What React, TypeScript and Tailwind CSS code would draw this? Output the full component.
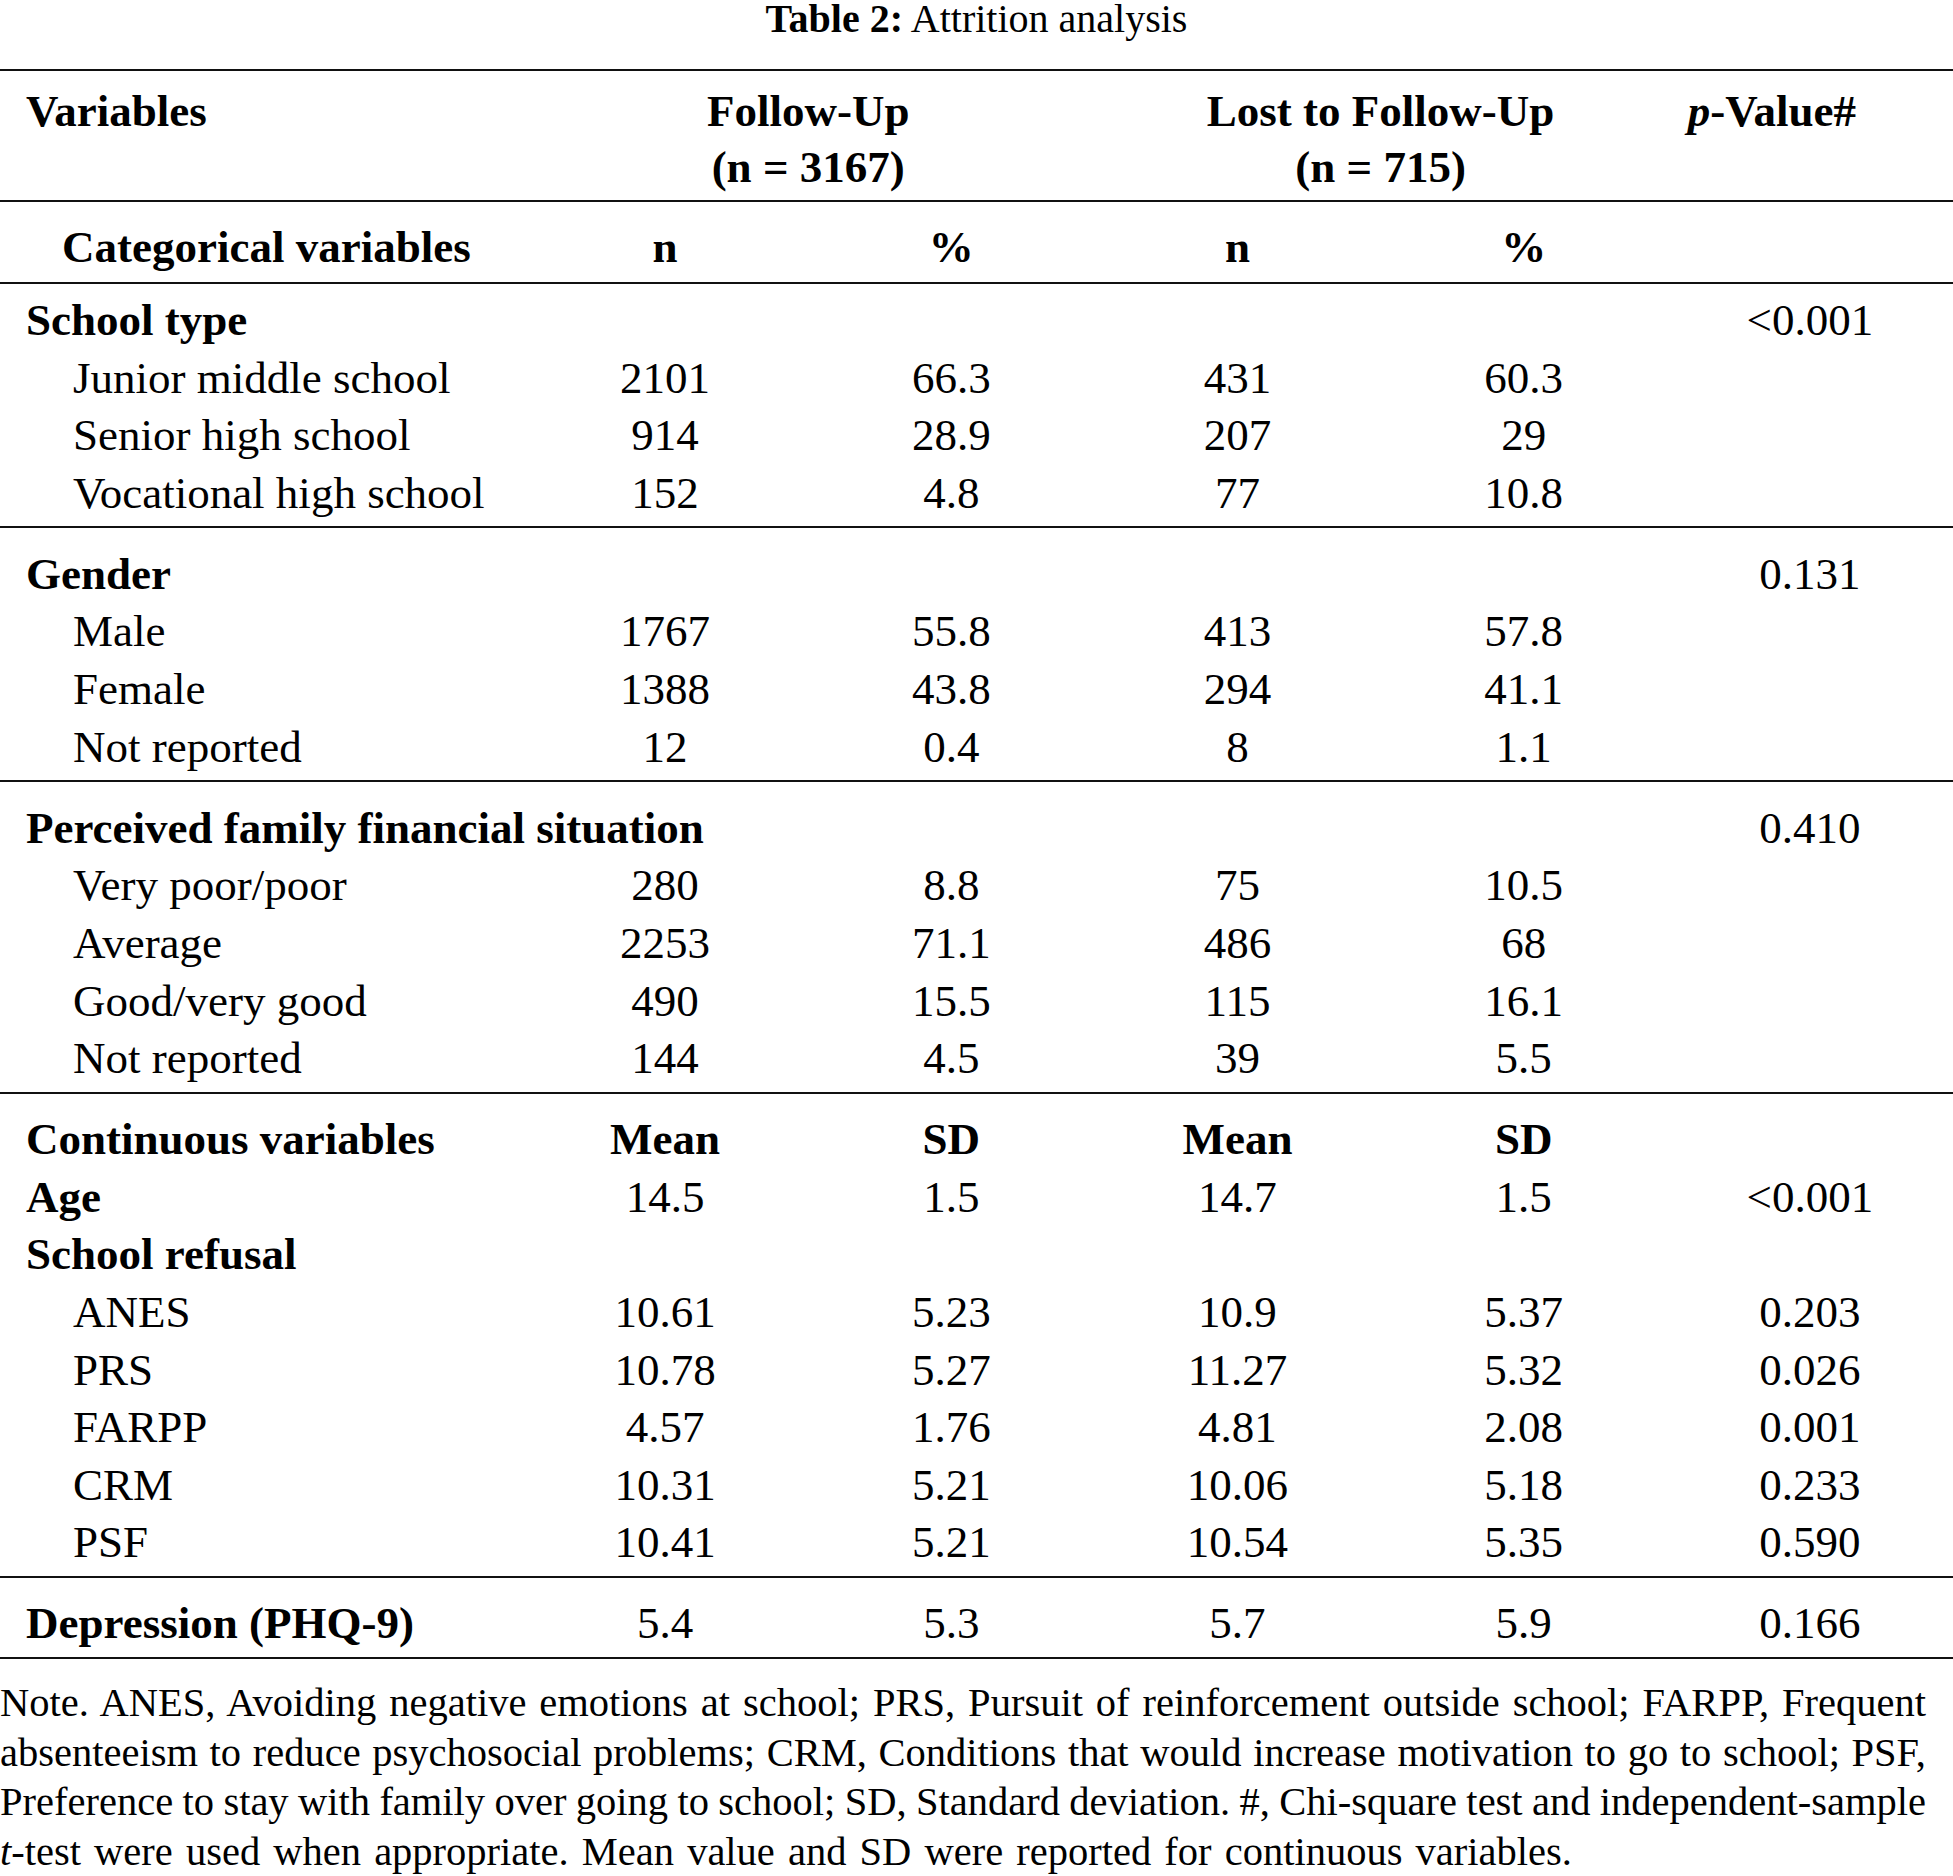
import React from "react";

type Cells = [React.ReactNode, React.ReactNode, React.ReactNode, React.ReactNode, React.ReactNode];

function Row({
  label,
  indent = "head",
  bold = false,
  boldCells = false,
  cells = ["", "", "", "", ""],
}: {
  label: React.ReactNode;
  indent?: "head" | "sub" | "cat";
  bold?: boolean;
  boldCells?: boolean;
  cells?: Cells;
}) {
  const pad = indent === "sub" ? "pl-[73px]" : indent === "cat" ? "pl-[62px]" : "pl-[26px]";
  return (
    <div className="grid grid-cols-[522px_repeat(5,1fr)] h-[57.6px] leading-[57.6px] items-center">
      <div className={`${pad} whitespace-nowrap ${bold ? "font-bold" : ""}`}>{label}</div>
      {cells.map((c, i) => (
        <div key={i} className={`text-center whitespace-nowrap ${boldCells && i < 4 ? "font-bold" : ""}`}>
          {c}
        </div>
      ))}
    </div>
  );
}

function Rule() {
  return <div className="h-[2px] bg-[#111]" />;
}

function Section({ children, first = false }: { children: React.ReactNode; first?: boolean }) {
  return <div className={`${first ? "pt-[8px]" : "pt-[17.5px]"} pb-[4px]`}>{children}</div>;
}

export default function App() {
  return (
    <div className="w-full bg-white text-black font-['Liberation_Serif',serif]">
      <div className="pt-[2px] h-[36px] leading-[34px] text-[40px] text-center mb-[33px] whitespace-nowrap">
        <span className="font-bold">Table 2:</span> Attrition analysis
      </div>

      <div className="text-[45px]">
        <Rule />
        <div className="grid grid-cols-[522px_2fr_2fr_1fr] pt-[12px] pb-[4.5px] leading-[56px] font-bold">
          <div className="pl-[26px]">Variables</div>
          <div className="text-center whitespace-nowrap">
            Follow-Up
            <br />
            (n = 3167)
          </div>
          <div className="text-center whitespace-nowrap">
            Lost to Follow-Up
            <br />
            (n = 715)
          </div>
          <div className="text-center pr-[76px] whitespace-nowrap">
            <i>p</i>-Value#
          </div>
        </div>
        <Rule />
        <div className="pt-[17.5px] pb-[5.4px]">
          <Row label="Categorical variables" indent="cat" bold boldCells cells={["n", "%", "n", "%", ""]} />
        </div>
        <Rule />

        <Section first>
          <Row label="School type" bold cells={["", "", "", "", "<0.001"]} />
          <Row label="Junior middle school" indent="sub" cells={["2101", "66.3", "431", "60.3", ""]} />
          <Row label="Senior high school" indent="sub" cells={["914", "28.9", "207", "29", ""]} />
          <Row label="Vocational high school" indent="sub" cells={["152", "4.8", "77", "10.8", ""]} />
        </Section>
        <Rule />

        <Section>
          <Row label="Gender" bold cells={["", "", "", "", "0.131"]} />
          <Row label="Male" indent="sub" cells={["1767", "55.8", "413", "57.8", ""]} />
          <Row label="Female" indent="sub" cells={["1388", "43.8", "294", "41.1", ""]} />
          <Row label="Not reported" indent="sub" cells={["12", "0.4", "8", "1.1", ""]} />
        </Section>
        <Rule />

        <Section>
          <Row label="Perceived family financial situation" bold cells={["", "", "", "", "0.410"]} />
          <Row label="Very poor/poor" indent="sub" cells={["280", "8.8", "75", "10.5", ""]} />
          <Row label="Average" indent="sub" cells={["2253", "71.1", "486", "68", ""]} />
          <Row label="Good/very good" indent="sub" cells={["490", "15.5", "115", "16.1", ""]} />
          <Row label="Not reported" indent="sub" cells={["144", "4.5", "39", "5.5", ""]} />
        </Section>
        <Rule />

        <Section>
          <Row label="Continuous variables" bold boldCells cells={["Mean", "SD", "Mean", "SD", ""]} />
          <Row label="Age" bold cells={["14.5", "1.5", "14.7", "1.5", "<0.001"]} />
          <Row label="School refusal" bold />
          <Row label="ANES" indent="sub" cells={["10.61", "5.23", "10.9", "5.37", "0.203"]} />
          <Row label="PRS" indent="sub" cells={["10.78", "5.27", "11.27", "5.32", "0.026"]} />
          <Row label="FARPP" indent="sub" cells={["4.57", "1.76", "4.81", "2.08", "0.001"]} />
          <Row label="CRM" indent="sub" cells={["10.31", "5.21", "10.06", "5.18", "0.233"]} />
          <Row label="PSF" indent="sub" cells={["10.41", "5.21", "10.54", "5.35", "0.590"]} />
        </Section>
        <Rule />

        <Section>
          <Row label="Depression (PHQ-9)" bold cells={["5.4", "5.3", "5.7", "5.9", "0.166"]} />
        </Section>
        <Rule />
      </div>

      <div className="pt-[19px] pr-[27px] text-[40.5px] leading-[49.7px]">
        <div className="text-justify [text-align-last:justify] whitespace-nowrap [word-spacing:-1px]">
          Note. ANES, Avoiding negative emotions at school; PRS, Pursuit of reinforcement outside school; FARPP, Frequent
        </div>
        <div className="text-justify [text-align-last:justify] whitespace-nowrap [word-spacing:-1px]">
          absenteeism to reduce psychosocial problems; CRM, Conditions that would increase motivation to go to school; PSF,
        </div>
        <div className="text-justify [text-align-last:justify] whitespace-nowrap [word-spacing:-1px]">
          Preference to stay with family over going to school; SD, Standard deviation. #, Chi-square test and independent-sample
        </div>
        <div className="whitespace-nowrap [word-spacing:3px]">
          <i>t</i>-test were used when appropriate. Mean value and SD were reported for continuous variables.
        </div>
      </div>
    </div>
  );
}
